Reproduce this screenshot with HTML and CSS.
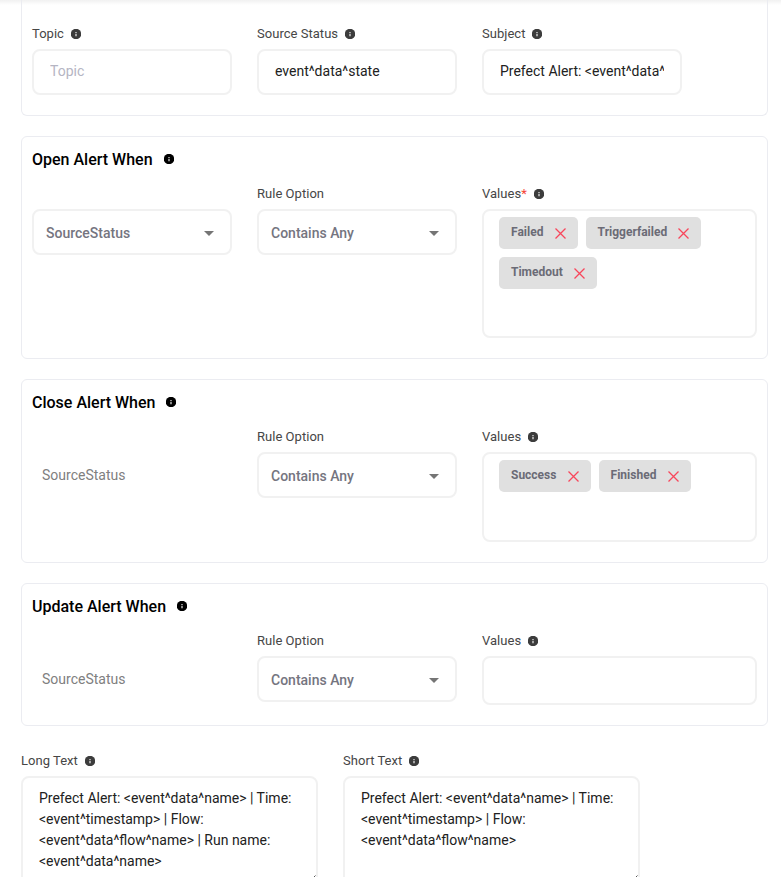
FILE: index.html
```
<!DOCTYPE html>
<html lang="en">
<head>
    <meta charset="UTF-8">
    <meta name="viewport" content="width=device-width, initial-scale=1.0">
    <title>Alert Rules</title>
    <link rel="stylesheet" href="styles.css">
</head>
<body>

<svg width="0" height="0" class="defs">
    <symbol id="info" viewBox="0 0 10 10">
        <circle cx="5" cy="5" r="5.2" fill="currentColor"/>
        <path d="M4.4 2.9h1.2v1.1h-1.2zM4.4 4.8h1.2v2.4h-1.2z" fill="#fff" fill-opacity="0.9"/>
    </symbol>
    <symbol id="close" viewBox="0 0 11 11">
        <path d="M.5 .5l10 10M10.5 .5l-10 10" fill="none" stroke="#f8465b" stroke-width="1.3"/>
    </symbol>
    <symbol id="grip" viewBox="0 0 9 9">
        <path d="M8.5 .5l-8 8M8.5 5.5l-3 3" fill="none" stroke="#555" stroke-width="1"/>
    </symbol>
</svg>

<div class="top-shadow"></div>

<div class="page">
    <div class="panel panel-first">
        <div class="row">
            <div class="col">
                <label class="label">Topic <svg class="info"><use href="#info"/></svg></label>
                <input class="input" type="text" placeholder="Topic">
            </div>
            <div class="col">
                <label class="label">Source Status <svg class="info"><use href="#info"/></svg></label>
                <input class="input" type="text" value="event^data^state">
            </div>
            <div class="col">
                <label class="label">Subject <svg class="info"><use href="#info"/></svg></label>
                <input class="input" type="text" value="Prefect Alert: &lt;event^data^name&gt;">
            </div>
        </div>
    </div>

    <div class="panel panel-open">
        <h2 class="title">Open Alert When <svg class="info"><use href="#info"/></svg></h2>
        <div class="row">
            <div class="col">
                <label class="label"></label>
                <div class="select">SourceStatus <span class="arrow"></span></div>
            </div>
            <div class="col">
                <label class="label">Rule Option</label>
                <div class="select">Contains Any <span class="arrow"></span></div>
            </div>
            <div class="col col-wide">
                <label class="label">Values<span class="required">*</span> <svg class="info"><use href="#info"/></svg></label>
                <div class="values values-open">
                    <span class="chip">Failed <svg class="close"><use href="#close"/></svg></span>
                    <span class="chip">Triggerfailed <svg class="close"><use href="#close"/></svg></span>
                    <span class="chip">Timedout <svg class="close"><use href="#close"/></svg></span>
                </div>
            </div>
        </div>
    </div>

    <div class="panel panel-close">
        <h2 class="title">Close Alert When <svg class="info"><use href="#info"/></svg></h2>
        <div class="row">
            <div class="col">
                <label class="label"></label>
                <div class="source">SourceStatus</div>
            </div>
            <div class="col">
                <label class="label">Rule Option</label>
                <div class="select">Contains Any <span class="arrow"></span></div>
            </div>
            <div class="col col-wide">
                <label class="label">Values <svg class="info"><use href="#info"/></svg></label>
                <div class="values values-close">
                    <span class="chip">Success <svg class="close"><use href="#close"/></svg></span>
                    <span class="chip">Finished <svg class="close"><use href="#close"/></svg></span>
                </div>
            </div>
        </div>
    </div>

    <div class="panel panel-update">
        <h2 class="title">Update Alert When <svg class="info"><use href="#info"/></svg></h2>
        <div class="row">
            <div class="col">
                <label class="label"></label>
                <div class="source">SourceStatus</div>
            </div>
            <div class="col">
                <label class="label">Rule Option</label>
                <div class="select">Contains Any <span class="arrow"></span></div>
            </div>
            <div class="col col-wide">
                <label class="label">Values <svg class="info"><use href="#info"/></svg></label>
                <div class="values values-update"></div>
            </div>
        </div>
    </div>

    <div class="row texts">
        <div class="col">
            <label class="label">Long Text <svg class="info"><use href="#info"/></svg></label>
            <textarea class="textarea">Prefect Alert: &lt;event^data^name&gt; | Time: &lt;event^timestamp&gt; | Flow: &lt;event^data^flow^name&gt; | Run name: &lt;event^data^name&gt;</textarea>
            <svg class="grip"><use href="#grip"/></svg>
        </div>
        <div class="col">
            <label class="label">Short Text <svg class="info"><use href="#info"/></svg></label>
            <textarea class="textarea">Prefect Alert: &lt;event^data^name&gt; | Time: &lt;event^timestamp&gt; | Flow: &lt;event^data^flow^name&gt;</textarea>
            <svg class="grip"><use href="#grip"/></svg>
        </div>
    </div>
</div>

</body>
</html>
```
FILE: styles.css
```
* {
    box-sizing: border-box;
}

html {
    overflow: hidden;
}

body {
    margin: 0;
    height: 877px;
    overflow: hidden;
    background: #fff;
    font-family: Roboto, Arial, sans-serif;
    font-size: 14px;
}

.defs {
    display: block;
}

.top-shadow {
    height: 5px;
    margin-bottom: -5px;
    background: linear-gradient(#f1f1f1, #fff);
}

.page {
    padding: 0 13px 0 21px;
}

.panel {
    border: 1px solid #ebecf1;
    border-radius: 6px;
    padding: 0 10px;
    margin-bottom: 20px;
}

.panel-first {
    height: 116px;
    border-top: none;
    border-radius: 0 0 6px 6px;
    padding-top: 23px;
}

.panel-open { height: 223px; }
.panel-close { height: 184px; }
.panel-update { height: 143px; }

.title {
    display: flex;
    align-items: center;
    gap: 11px;
    height: 46px;
    margin: 0;
    padding-bottom: 2px;
    font-size: 16px;
    font-weight: 500;
    color: #000;
}

.row {
    display: flex;
    gap: 25px;
}

.col {
    width: 200px;
}

.col-wide {
    width: 275px;
}

.label {
    display: flex;
    align-items: center;
    height: 22px;
    margin-bottom: 4px;
    padding-bottom: 2px;
    font-size: 13px;
    letter-spacing: 0.03px;
    color: #464646;
}

.label .info {
    margin: 2px 0 0 7px;
    color: #3c3c3c;
}

.info {
    width: 10px;
    height: 10px;
    overflow: visible;
}

.required {
    color: #f44336;
}

.input, .select, .values, .textarea {
    display: block;
    width: 100%;
    background: #fff;
    border: 2px solid #f1f1f1;
    border-radius: 8px;
    font-family: inherit;
    font-size: 14px;
    outline: none;
}

.input {
    height: 46px;
    padding: 0 16px 2px;
    color: #212121;
}

.input::placeholder {
    color: #b5b5c3;
}

.select {
    display: flex;
    align-items: center;
    justify-content: space-between;
    height: 46px;
    padding: 1px 16px 0 12px;
    font-weight: 500;
    color: #75757f;
}

.arrow {
    margin-top: 2px;
    border: 5px solid transparent;
    border-top-color: #757575;
    border-bottom: none;
}

.source {
    height: 46px;
    padding-left: 10px;
    line-height: 46px;
    color: #808080;
}

.values {
    display: flex;
    flex-wrap: wrap;
    align-content: flex-start;
    gap: 8px;
    padding: 6px 15px;
}

.values-open { height: 129px; }
.values-close { height: 90px; }
.values-update { height: 49px; }

.chip {
    display: flex;
    align-items: center;
    height: 32px;
    padding: 0 12px 2px;
    border-radius: 5px;
    background: #e0e0e0;
    font-size: 12px;
    font-weight: 700;
    color: #6b6b76;
}

.close {
    width: 11px;
    height: 11px;
    margin: 3px 0 0 11.2px;
}

.texts .col {
    position: relative;
    width: 297px;
}

.texts {
    padding-top: 4px;
}

.textarea {
    height: 111px;
    padding: 10px 16px;
    line-height: 21px;
    color: #212121;
    resize: none;
}

/* resize corner of the textarea */
.grip {
    position: absolute;
    right: 2px;
    bottom: 3px;
    width: 9px;
    height: 9px;
}
```
